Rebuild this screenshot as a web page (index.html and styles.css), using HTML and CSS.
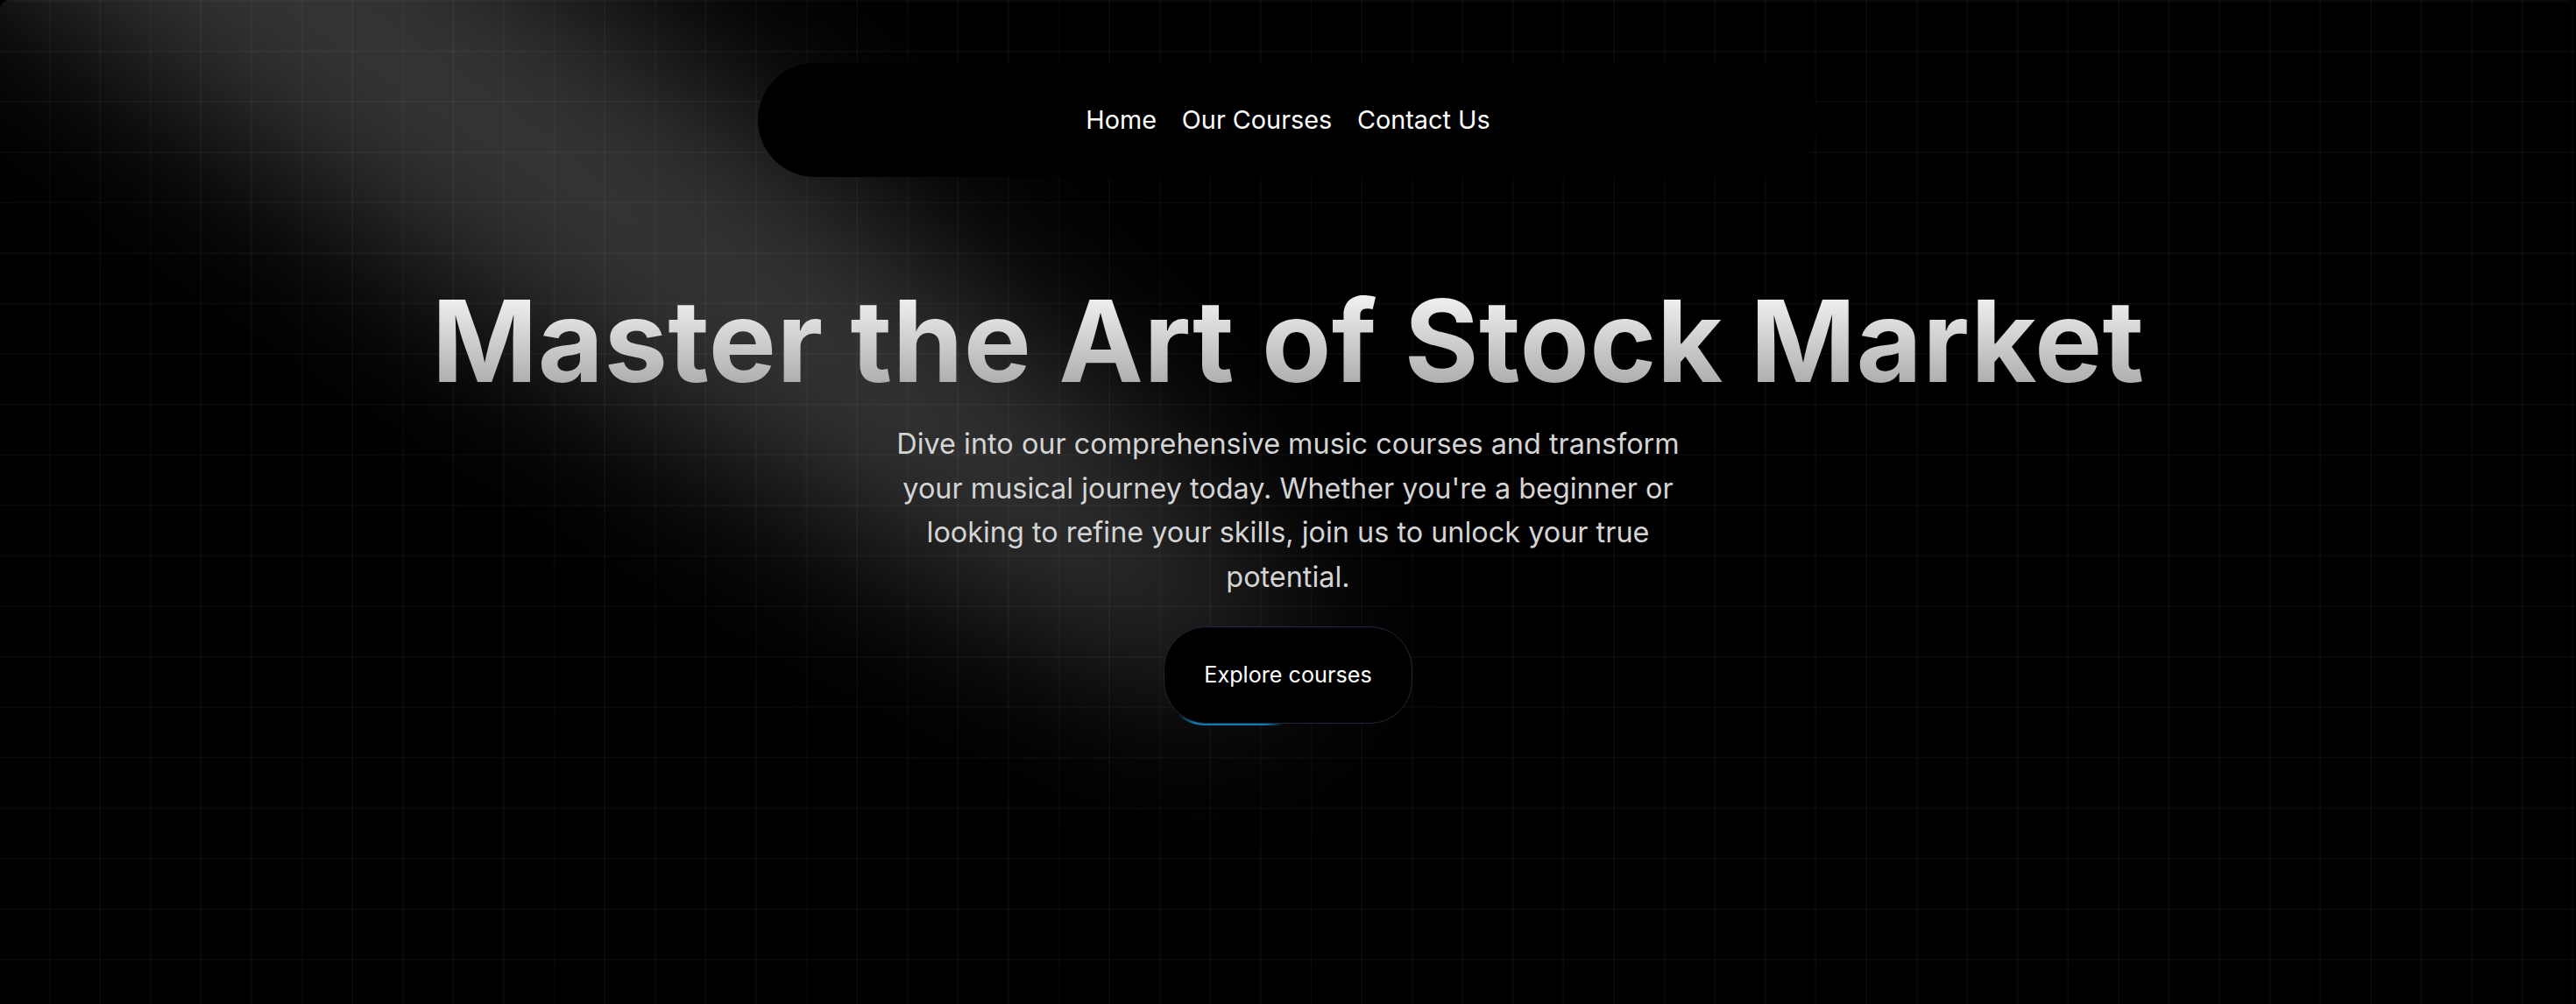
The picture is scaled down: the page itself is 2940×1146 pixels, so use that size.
FILE: index.html
```html
<!DOCTYPE html>
<html lang="en">
<head>
<meta charset="utf-8">
<title>Music School</title>
<link rel="stylesheet" href="styles.css">
</head>
<body>
<div class="page">
  <div class="nav-wrap">
    <nav class="menu">
      <a class="menu-item">Home</a>
      <a class="menu-item">Our Courses</a>
      <a class="menu-item">Contact Us</a>
    </nav>
  </div>
  <section class="hero">
    <svg class="spotlight" viewBox="0 0 3787 2842" fill="none" xmlns="http://www.w3.org/2000/svg">
      <g filter="url(#spotfilter)">
        <ellipse cx="1924.71" cy="273.501" rx="1924.71" ry="273.501" transform="matrix(-0.822377 -0.568943 -0.568943 0.822377 3631.88 2291.09)" fill="white" fill-opacity="0.21"></ellipse>
      </g>
      <defs>
        <filter id="spotfilter" x="0.860352" y="0.838989" width="3785.16" height="2840.26" filterUnits="userSpaceOnUse" color-interpolation-filters="sRGB">
          <feFlood flood-opacity="0" result="BackgroundImageFix"></feFlood>
          <feBlend mode="normal" in="SourceGraphic" in2="BackgroundImageFix" result="shape"></feBlend>
          <feGaussianBlur stdDeviation="151" result="blur"></feGaussianBlur>
        </filter>
      </defs>
    </svg>
    <div class="content">
      <h1 class="title">Master the Art of Stock Market</h1>
      <p class="lead">Dive into our comprehensive music courses and transform your musical journey today. Whether you're a beginner or looking to refine your skills, join us to unlock your true potential.</p>
      <div class="cta">
        <a class="btn">
          <span class="btn-glow"></span>
          <span class="btn-inner">Explore courses</span>
        </a>
      </div>
    </div>
  </section>
</div>
</body>
</html>
```

FILE: styles.css
```css
html, body {
  margin: 0;
  padding: 0;
  background: #000;
}

body {
  font-family: Inter, "Noto Sans", "Liberation Sans", sans-serif;
  color: #fff;
  -webkit-font-smoothing: antialiased;
  overflow: hidden;
}

.page {
  position: relative;
  width: 100%;
}

.nav-wrap {
  position: fixed;
  top: 72px;
  left: 0;
  right: 0;
  max-width: 1209.6px;
  margin: 0 auto;
  z-index: 50;
}

.menu {
  display: flex;
  justify-content: center;
  gap: 28.8px;
  padding: 43.2px 57.6px;
  border-radius: 9999px;
  background: #000;
}

.menu-item {
  font-size: 28.8px;
  line-height: 43.2px;
  color: #fff;
  cursor: pointer;
}

.hero {
  position: relative;
  width: 100%;
  height: 1152px;
  border-radius: 10.8px;
  overflow: hidden;
  display: flex;
  flex-direction: column;
  align-items: center;
  justify-content: center;
  background-color: rgba(0, 0, 0, 0.96);
  background-image:
    linear-gradient(to right, transparent 55.8px, rgba(255, 255, 255, 0.03) 55.8px, rgba(255, 255, 255, 0.03) 57.6px),
    linear-gradient(to bottom, rgba(255, 255, 255, 0.03) 0, rgba(255, 255, 255, 0.03) 1.8px, transparent 1.8px);
  background-size: 57.6px 57.6px;
}

.spotlight {
  position: absolute;
  z-index: 1;
  pointer-events: none;
  left: 432px;
  top: -144px;
  width: 84%;
  height: 169%;
  transform: translate(-50%, -40%);
}

.content {
  position: relative;
  z-index: 10;
  width: 100%;
  box-sizing: border-box;
  padding: 28.8px;
  text-align: center;
}

.title {
  margin: 0;
  font-size: 129.6px;
  line-height: 1;
  font-weight: 700;
  letter-spacing: 0.35px;
  background: linear-gradient(to bottom, #fafafa, #a3a3a3);
  -webkit-background-clip: text;
  background-clip: text;
  color: transparent;
}

.lead {
  margin: 28.8px auto 0;
  max-width: 921.6px;
  font-size: 32.4px;
  line-height: 50.4px;
  font-weight: 400;
  color: #d4d4d4;
}

.cta {
  margin-top: 28.8px;
  display: flex;
  justify-content: center;
}

.btn {
  position: relative;
  display: block;
  box-sizing: border-box;
  width: 288px;
  height: 115.2px;
  padding: 1.8px;
  overflow: hidden;
  border-radius: 50.4px;
  cursor: pointer;
}

.btn-glow {
  position: absolute;
  left: 6px;
  top: 46px;
  width: 144px;
  height: 144px;
  opacity: 0.75;
  background: radial-gradient(#0ea5e9 40%, transparent 60%);
}

.btn-inner {
  position: relative;
  box-sizing: border-box;
  width: 100%;
  height: 100%;
  display: flex;
  align-items: center;
  justify-content: center;
  background: #000;
  border: 1.8px solid #1e293b;
  border-radius: 48.4px;
  color: #fff;
  font-size: 25.2px;
  line-height: 36px;
}
```
